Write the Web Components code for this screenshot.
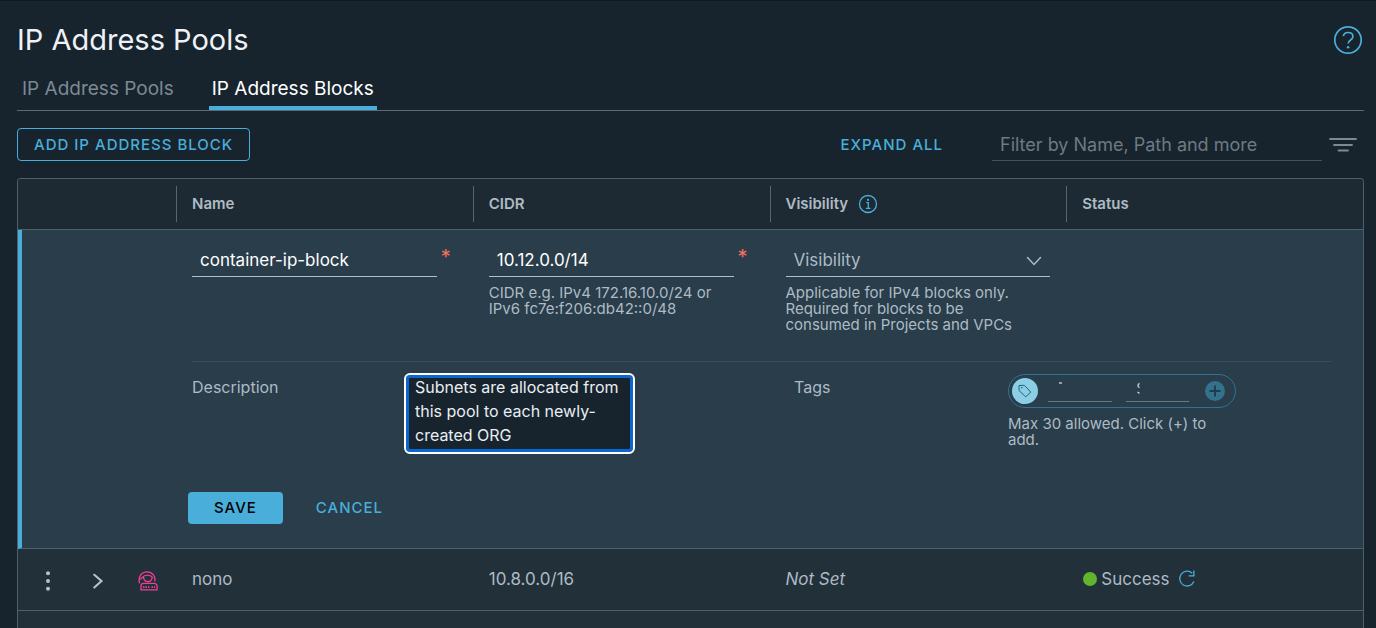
<!DOCTYPE html>
<html lang="en">
<head>
<meta charset="utf-8">
<title>IP Address Pools</title>
<style>
  html, body { margin: 0; height: 100%; }
  body {
    background: #17242d; color: #adbbc4; overflow: hidden;
    font-family: Inter, "Noto Sans", sans-serif; font-size: 16px; line-height: 24px;
    --accent: #49aeda; --line: #4d606b; --dim: #7b8a93;
  }
</style>
</head>
<body>
<ip-pools-page></ip-pools-page>

<script>
const define = (name, html, setup) => {
  const template = document.createElement('template');
  template.innerHTML = html;
  customElements.define(name, class extends HTMLElement {
    constructor() {
      super();
      this.attachShadow({ mode: 'open' }).append(template.content.cloneNode(true));
    }
    connectedCallback() { if (setup) setup(this, this.shadowRoot); }
  });
};

const icons = {
  help: ['0 0 30 30', '<circle cx="15" cy="15" r="13.2" stroke-width="1.7"/><path d="M10.3 11.2C10.8 8.7 12.8 7.5 15.1 7.5c2.7 0 4.8 1.5 4.8 4 0 3.8-4.7 3.2-4.7 7.1" stroke-width="1.7"/><circle cx="15.1" cy="22.3" r="1.3" fill="currentColor" stroke="none"/>'],
  info: ['0 0 20 20', '<circle cx="10" cy="10" r="8.5" stroke-width="1.3"/><path d="M8.3 8.7h2v5.4M7.9 14.3h4.6" stroke-width="1.3"/><circle cx="10" cy="5.9" r="1.1" fill="currentColor" stroke="none"/>'],
  filter: ['0 0 28 20', '<path d="M1 4h26M5 10h18M9.500 15.500h9.500" stroke-width="1.8" stroke-linecap="round"/>'],
  dots: ['0 0 20 20', '<g fill="currentColor" stroke="none"><circle cx="10" cy="2.300" r="2"/><circle cx="10" cy="10" r="2"/><circle cx="10" cy="17.700" r="2"/></g>'],
  chevron: ['0 0 16 16', '<path d="M4.300 1.800 11.500 8l-7.200 6.600" stroke-width="2.100" stroke-linecap="round"/>'],
  user: ['0 0 20 20', '<path d="M1.600 12.200C-.4 6 3.600.9 9 .9c5.400 0 8.600 4.300 7.900 9.600M1 8.500c1.300 0 2-.4 3-1.800 1.800-2 3.600-2.500 5.500-2.500 2.300 0 3.900.8 5.300 2.500M5.400 6.200c.4 3.200 2.200 4.500 4.500 4.500s4-1.500 4.400-4.700M3 18.900v-3.800c0-1.800 1-2.700 2.600-2.700h10.200c2 0 3.300 1 3.300 2.900v3.600z" stroke-width="1.300"/><path d="M5 15.300h1.500v1.700H5zM7.500 15.300H9v1.700H7.500zM10 15.300h1.300v1.700H10zM13.500 15.300h1.500v1.700h-1.500zM15.900 15.300h1.300v1.700h-1.300z" fill="currentColor" stroke="none"/>'],
  refresh: ['0 0 20 20', '<path d="M15.300 4.300A7.400 7.400 0 1 0 16.900 12.600M16.900 1.500v5.300h-5.300" stroke-width="1.300"/>'],
  tag: ['0 0 16 16', '<path d="M2 2.500v5l6.700 6.300 5.100-4.700L7.300 2.300z" stroke-width="1" stroke-linejoin="round"/><circle cx="4.800" cy="4.800" r=".8" fill="currentColor" stroke="none"/>'],
  plus: ['0 0 20 20', '<circle cx="10" cy="10" r="10" fill="#33718d" stroke="none"/><path d="M10 4.500v11M4.500 10h11" stroke-width="1.900"/>'],
  down: ['0 0 16 16', '<path d="M1.500 4.500 8 11.500l6.500-7" stroke-width="1.500" stroke-linecap="round"/>']
};

define('ui-icon', `
  <style>:host { display: inline-flex; flex: none; width: 20px; height: 20px } svg { width: 100%; height: 100% }</style>
  <svg fill="none" stroke="currentColor" aria-hidden="true"></svg>`,
  (host, root) => {
    const [box, art] = icons[host.getAttribute('name')];
    const svg = root.querySelector('svg');
    svg.setAttribute('viewBox', box);
    svg.innerHTML = art;
  });

define('ui-button', `
  <style>
    :host { display: inline-flex }
    button {
      font: 500 15px/20px Inter, sans-serif; letter-spacing: 1px; text-transform: uppercase;
      height: 32px; padding: 0 16px; border: 1px solid transparent; border-radius: 4px;
      background: none; color: var(--accent); cursor: pointer;
    }
    :host([kind=outline]) button { border-color: var(--accent); height: 33px }
    :host([kind=solid]) button { background: var(--accent); color: #000; padding: 0 25px }
  </style>
  <button type="button"><slot></slot></button>`);

define('page-header', `
  <style>
    :host { display: flex; justify-content: space-between; align-items: center; padding: 19px 1px 0 0 }
    h1 { margin: 0; font-size: 29px; line-height: 40px; font-weight: 400; color: #eef2f7 }
    button { border: 0; padding: 0; background: none; color: var(--accent); display: flex }
    ui-icon { width: 30px; height: 30px }
  </style>
  <h1><slot></slot></h1>
  <button type="button" aria-label="Help"><ui-icon name="help"></ui-icon></button>`);

define('tab-bar', `
  <style>
    :host { display: flex; gap: 32px; margin-top: 17px; padding-left: 2px; border-bottom: 1px solid #5b6a73 }
    ::slotted(a) {
      padding: 0 3px 5px; border-bottom: 4px solid transparent;
      font-size: 19px; line-height: 24px; color: var(--dim); text-decoration: none;
    }
    ::slotted(a[aria-current]) { color: #fff; border-color: var(--accent) }
  </style>
  <slot></slot>`);

define('tool-bar', `
  <style>
    :host { display: flex; align-items: center; padding: 17px 0 }
    .end { margin-left: auto; display: flex; align-items: center }
    input {
      box-sizing: border-box; width: 330px; height: 32px; margin-left: 32px; padding: 0 8px;
      font: 400 18px/24px Inter, sans-serif; color: #fff;
      background: none; border: 0; border-bottom: 1px solid #41525d;
    }
    input::placeholder { color: #6d7a83; opacity: 1 }
    .filter { display: flex; border: 0; background: none; color: var(--dim); padding: 0; margin: 0 7px 0 7px }
    .filter ui-icon { width: 28px }
  </style>
  <ui-button kind="outline">Add IP Address Block</ui-button>
  <div class="end">
    <ui-button>Expand All</ui-button>
    <input type="text" aria-label="Filter" placeholder="Filter by Name, Path and more">
    <button class="filter" type="button" aria-label="Filter options"><ui-icon name="filter"></ui-icon></button>
  </div>`);

define('form-field', `
  <style>
    :host { display: block }
    .control { position: relative; display: flex; border-bottom: 1px solid #b0c0c8 }
    :host([required]) .control { margin-right: 20px }
    ::slotted(input), ::slotted(select) {
      flex: 1; min-width: 0; box-sizing: border-box; height: 32px; padding: 0 8px !important; margin: 0;
      font: 400 17px/24px Inter, sans-serif !important; color: #fff; background: none; border: 0; appearance: none; outline: none;
    }
    ::slotted(select) { color: #adbbc4 }
    .mark { display: none; position: absolute; right: -14px; top: 1px; color: #f3705c; font-size: 20px }
    :host([required]) .mark { display: block }
    ui-icon { display: none; position: absolute; right: 8px; top: 7px; width: 16px; height: 16px; pointer-events: none }
    :host([menu]) ui-icon { display: block }
    .hint { margin-top: 8px; padding-right: 16px; font-size: 15px; line-height: 16px }
  </style>
  <div class="control"><slot></slot><span class="mark">*</span><ui-icon name="down"></ui-icon></div>
  <div class="hint"><slot name="hint"></slot></div>`);

define('tag-editor', `
  <style>
    :host { display: block; width: 228px }
    .pill {
      box-sizing: border-box; height: 34px; padding: 0 10px 0 3px; margin-top: 1px;
      display: flex; align-items: center; border: 1px solid #2e7394; border-radius: 17px;
    }
    .badge {
      width: 26px; height: 26px; border-radius: 50%; background: #8ccfe5; color: #23627f;
      display: flex; align-items: center; justify-content: center;
    }
    .badge ui-icon { width: 16px; height: 16px }
    .entry { position: relative; flex: 1; margin-left: 10px; height: 20px; border-bottom: 1px solid #647985 }
    .entry + .entry { margin-left: 14px }
    .entry svg { position: absolute; left: 10px; top: 0; width: 10px; height: 16px; pointer-events: none }
    input { display: block; width: 100%; height: 20px; box-sizing: border-box; border: 0; padding: 0; background: none; color: #fff; font: inherit }
    button { display: flex; margin-left: 16px; padding: 0; border: 0; background: none; color: #203c4c }
    .hint { margin-top: 8px; padding-right: 16px; font-size: 15px; line-height: 16px }
  </style>
  <div class="pill">
    <span class="badge"><ui-icon name="tag"></ui-icon></span>
    <span class="entry"><input type="text" aria-label="Tag"><svg><path d="M1 2h3" stroke="#dfe7ec" stroke-width="1.200"/></svg></span>
    <span class="entry"><input type="text" aria-label="Scope"><svg><path d="M3.500 2.500C1.500 3 1.500 6 3.500 6.700M1.500 11l2 1.300" fill="none" stroke="#c3cfd6" stroke-width="1.400"/></svg></span>
    <button type="button" aria-label="Add tag"><ui-icon name="plus"></ui-icon></button>
  </div>
  <div class="hint"><slot></slot></div>`);

define('status-badge', `
  <style>
    :host { display: flex; align-items: center }
    i { width: 14px; height: 14px; border-radius: 50%; background: #62b32e; margin: 0 4px 0 1px }
    button { display: flex; border: 0; padding: 0; margin-left: 7px; background: none; color: var(--accent) }
  </style>
  <i></i><slot></slot>
  <button type="button" aria-label="Refresh status"><ui-icon name="refresh"></ui-icon></button>`);

define('block-table', `
  <style>
    :host { display: block; flex: 1; min-height: 0; overflow: hidden; border: 1px solid var(--line); border-bottom: 0; border-radius: 4px 4px 0 0; background: #22303a }
    table { width: 100%; table-layout: fixed; border-collapse: separate; border-spacing: 0 }
    .tools { width: 158px }
    th, td { padding: 0 16px; text-align: left; font-weight: 400 }
    thead { background: #1d2933 }
    thead th, thead td { height: 50px; padding: 0; border-bottom: 1px solid var(--line); font-size: 15px; font-weight: 600 }
    thead span { display: flex; align-items: center; height: 36px; padding-left: 15px; gap: 10px; border-left: 1px solid #566670 }
    thead ui-icon { color: var(--accent) }
    .edit { background: #293d4b }
    .fields td { height: 131px; padding-top: 14px; box-sizing: border-box; vertical-align: top }
    .fields td:first-child, .more td:first-child { border-left: 4px solid var(--accent) }
    .more td { height: 188px; box-sizing: border-box; vertical-align: top; border-bottom: 1px solid var(--line); padding-right: 31px }
    .details { display: grid; grid-template-columns: 212fr 390fr 214fr 324fr; border-top: 1px solid #3a4c57; padding-top: 11px; height: 119px }
    label, .label { line-height: 28px }
    textarea {
      display: block; box-sizing: border-box; width: 231px; height: 81px; padding: 0 9px; resize: none; overflow: hidden;
      font: 400 16px/24px Inter, sans-serif; color: #e9eef4; background: #17242d;
      border: 2px solid #fff; border-radius: 6px; box-shadow: inset 0 0 0 3px #0a66d0; outline: none;
    }
    .actions { display: flex; gap: 16px; margin-left: -4px }
    .row > * { height: 59px; padding-bottom: 2px; border-bottom: 1px solid var(--line); font-size: 17px }
    .tool-set { display: flex; align-items: center; gap: 32px; padding: 4px 0 0 4px }
    .tool-set button { display: flex; padding: 0; border: 0; background: none; color: #b5c3cc }
    .tool-set ui-icon[name=chevron] { width: 16px; height: 16px }
    .tool-set ui-icon[name=user] { color: #ee3f96 }
  </style>
  <table>
    <colgroup><col class="tools"><col><col><col><col></colgroup>
    <thead><tr>
      <td></td>
      <th id="name"><span>Name</span></th>
      <th id="cidr"><span>CIDR</span></th>
      <th id="visibility"><span>Visibility <ui-icon name="info"></ui-icon></span></th>
      <th><span>Status</span></th>
    </tr></thead>
    <tbody>
      <tr class="edit fields">
        <td></td>
        <td><form-field required><input type="text" aria-labelledby="name" value="container-ip-block"></form-field></td>
        <td><form-field required><input type="text" aria-labelledby="cidr" value="10.12.0.0/14"><span slot="hint">CIDR e.g. IPv4 172.16.10.0/24 or IPv6 fc7e:f206:db42::0/48</span></form-field></td>
        <td><form-field menu><select aria-labelledby="visibility"><option>Visibility</option></select><span slot="hint">Applicable for IPv4 blocks only. Required for blocks to be consumed in Projects and VPCs</span></form-field></td>
        <td></td>
      </tr>
      <tr class="edit more">
        <td></td>
        <td colspan="4">
          <div class="details">
            <label for="description">Description</label>
            <div><textarea id="description">Subnets are allocated from this pool to each newly-created ORG</textarea></div>
            <span class="label">Tags</span>
            <tag-editor>Max 30 allowed. Click (+) to add.</tag-editor>
          </div>
          <div class="actions"><ui-button kind="solid">Save</ui-button><ui-button>Cancel</ui-button></div>
        </td>
      </tr>
      <tr class="row">
        <td><div class="tool-set">
          <button type="button" aria-label="Actions"><ui-icon name="dots"></ui-icon></button>
          <button type="button" aria-label="Expand"><ui-icon name="chevron"></ui-icon></button>
          <ui-icon name="user"></ui-icon>
        </div></td>
        <td>nono</td>
        <td>10.8.0.0/16</td>
        <td><em>Not Set</em></td>
        <td><status-badge>Success</status-badge></td>
      </tr>
    </tbody>
  </table>`);

define('ip-pools-page', `
  <style>
    :host { display: flex; flex-direction: column; height: 100vh; box-sizing: border-box; padding: 0 12px 0 17px; border-top: 1px solid #101a22 }
  </style>
  <page-header>IP Address Pools</page-header>
  <tab-bar><a href="#pools">IP Address Pools</a><a href="#blocks" aria-current="page">IP Address Blocks</a></tab-bar>
  <tool-bar></tool-bar>
  <block-table></block-table>`);
</script>
</body>
</html>
